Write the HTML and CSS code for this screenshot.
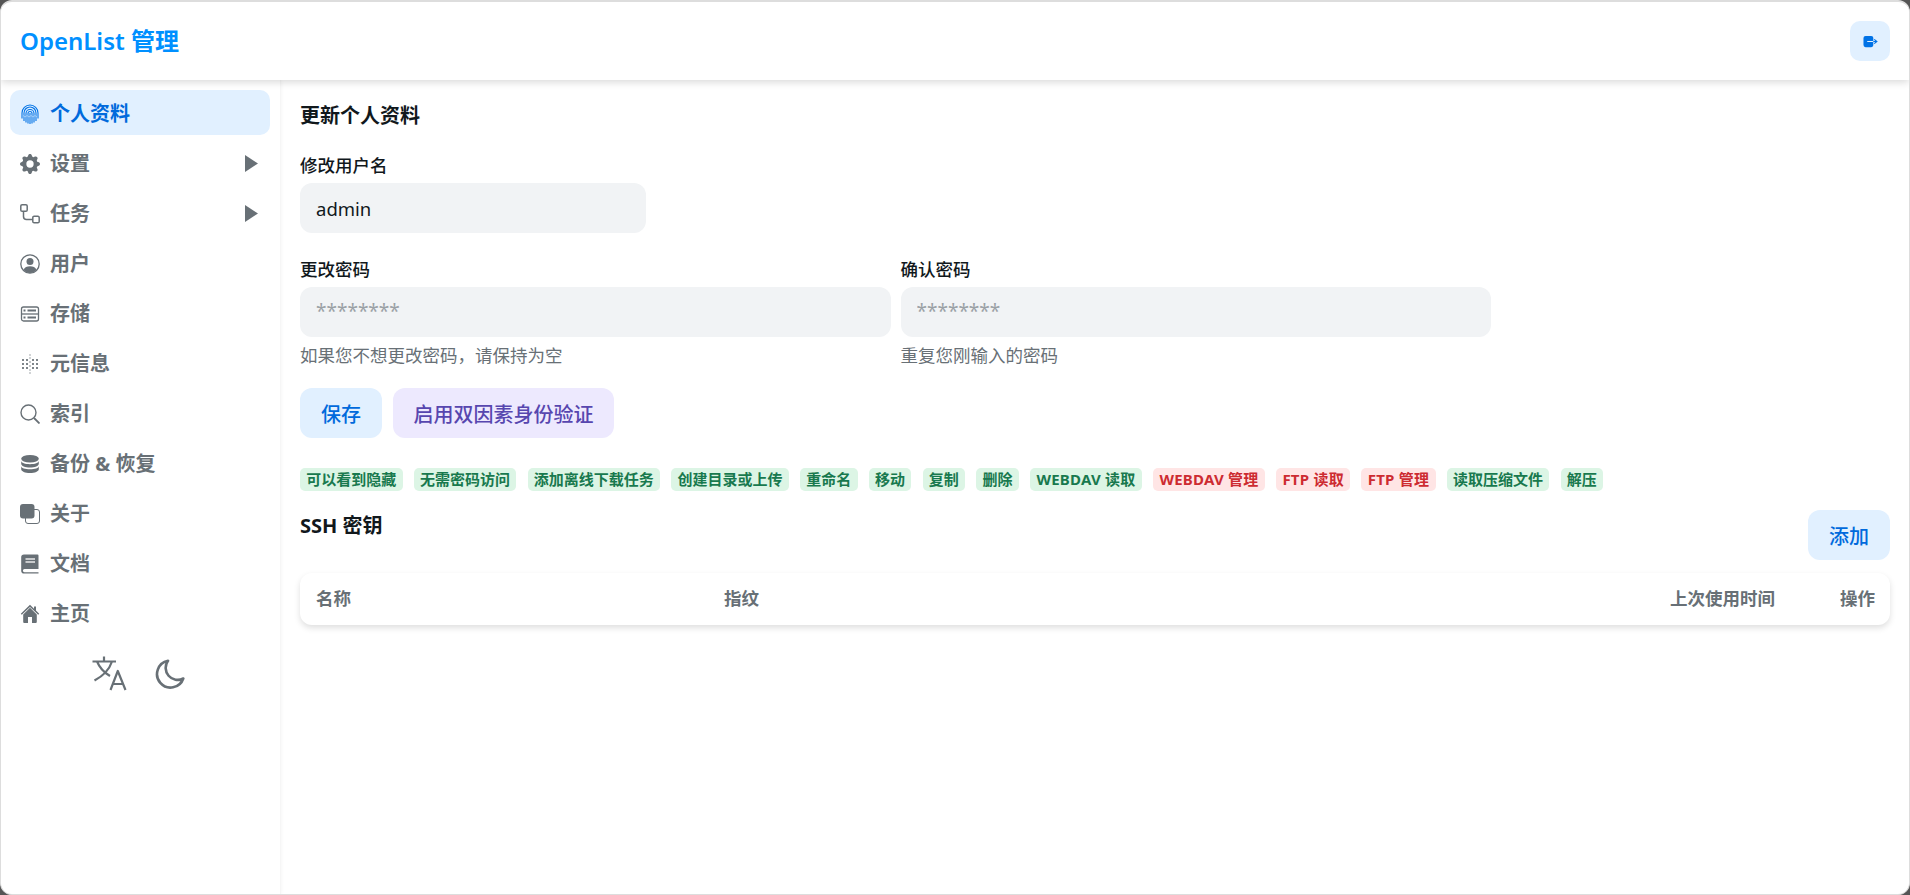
FILE: index.html
```html
<!DOCTYPE html>
<html lang="zh-CN">
<head>
<meta charset="utf-8">
<title>OpenList 管理</title>
<link rel="stylesheet" href="styles.css">
</head>
<body>
<div class="app">
  <header class="topbar">
    <h1 class="brand">OpenList 管理</h1>
    <button class="logout" type="button" aria-label="退出">
      <svg viewBox="0 0 16 16" width="15" height="15"><rect x="0.5" y="2" width="10.5" height="12" rx="2.2" fill="#0072e6"/><path d="M4.5 8H14.5M12 5.7 14.8 8 12 10.3" fill="none" stroke="#0072e6" stroke-width="1.2"/><path d="M4.5 8H11" stroke="#e1f0ff" stroke-width="1.2"/></svg>
    </button>
  </header>
  <div class="body">
    <aside class="sidebar">
      <nav class="menu">
        <a class="item active">
          <svg class="ico" viewBox="0 0 20 20" fill="none" stroke="#0072e6" stroke-width="1.100"><path d="M2 14.500V9a8 8 0 0 1 16 0v5.500"/><path d="M4 17V9a6 6 0 0 1 12 0v8"/><path d="M6 18.500V9.500a4 4 0 0 1 8 0v9"/><path d="M8 19.500V9.500a2 2 0 0 1 4 0v10"/><path d="M10 9V20"/><path d="M3 11.500 5 13 7 11.500 9 13 11 11.500 13 13 15 11.500 17 13" stroke="#e1f0ff" stroke-width=".5"/></svg>
          <span class="label">个人资料</span>
        </a>
        <a class="item">
          <svg class="ico" viewBox="0 0 16 16" fill="#687076"><path d="M9.405 1.050c-.413-1.400-2.397-1.400-2.810 0l-.100.340a1.464 1.464 0 0 1-2.105.872l-.310-.170c-1.283-.698-2.686.705-1.987 1.987l.169.311c.446.820.023 1.841-.872 2.105l-.340.100c-1.400.413-1.400 2.397 0 2.810l.340.100a1.464 1.464 0 0 1 .872 2.105l-.170.310c-.698 1.283.705 2.686 1.987 1.987l.311-.169a1.464 1.464 0 0 1 2.105.872l.100.340c.413 1.400 2.397 1.400 2.810 0l.100-.340a1.464 1.464 0 0 1 2.105-.872l.310.170c1.283.698 2.686-.705 1.987-1.987l-.169-.311a1.464 1.464 0 0 1 .872-2.105l.340-.100c1.400-.413 1.400-2.397 0-2.810l-.340-.100a1.464 1.464 0 0 1-.872-2.105l.170-.310c.698-1.283-.705-2.686-1.987-1.987l-.311.169a1.464 1.464 0 0 1-2.105-.872l-.100-.340zM8 10.930a2.929 2.929 0 1 1 0-5.860 2.929 2.929 0 0 1 0 5.858z"/></svg>
          <span class="label">设置</span>
          <svg class="caret" viewBox="0 0 13 17"><path d="M0 0 13 8.500 0 17z" fill="#687076"/></svg>
        </a>
        <a class="item">
          <svg class="ico" viewBox="0 0 20 20" fill="none" stroke="#687076" stroke-width="1.500"><rect x=".8" y=".8" width="6.400" height="6.400" rx="1.300"/><rect x="12.800" y="12.300" width="6.400" height="6.400" rx="1.300"/><path d="M3.500 7.200v5.300c0 2 1.200 3 3 3H12.800"/></svg>
          <span class="label">任务</span>
          <svg class="caret" viewBox="0 0 13 17"><path d="M0 0 13 8.500 0 17z" fill="#687076"/></svg>
        </a>
        <a class="item">
          <svg class="ico" viewBox="0 0 20 20"><circle cx="10" cy="10" r="9.200" fill="none" stroke="#687076" stroke-width="1.300"/><circle cx="10" cy="7.500" r="3.500" fill="#687076"/><path d="M3.500 15.800C4.500 13.300 7 12.300 10 12.300s5.500 1 6.500 3.500C15 17.800 12.700 19 10 19s-5-1.200-6.500-3.200z" fill="#687076"/></svg>
          <span class="label">用户</span>
        </a>
        <a class="item">
          <svg class="ico" viewBox="0 0 20 20" fill="none" stroke="#687076" stroke-width="1.300"><rect x="1.500" y="3" width="17" height="14" rx="2"/><path d="M1.500 10H18.500"/><path d="M7.500 6.500H16M7.500 13.500H16" stroke-width="1.800"/><path d="M3.500 6.500H5.500M3.500 13.500H5.500" stroke-width="1.800"/></svg>
          <span class="label">存储</span>
        </a>
        <a class="item">
          <svg class="ico" viewBox="0 0 20 20" fill="#687076"><g opacity=".3"><rect x="9" y="0" width="2" height="2"/><rect x="9" y="3" width="2" height="2"/><rect x="9" y="15" width="2" height="2"/><rect x="9" y="18" width="2" height="2"/></g><g opacity=".85"><rect x="2" y="5" width="2" height="2"/><rect x="6" y="5" width="2" height="2"/><rect x="12" y="5" width="2" height="2"/><rect x="16" y="5" width="2" height="2"/><rect x="2" y="9" width="2" height="2"/><rect x="6" y="9" width="2" height="2"/><rect x="12" y="9" width="2" height="2"/><rect x="16" y="9" width="2" height="2"/><rect x="2" y="13" width="2" height="2"/><rect x="6" y="13" width="2" height="2"/><rect x="12" y="13" width="2" height="2"/><rect x="16" y="13" width="2" height="2"/></g><g opacity=".4"><rect x="9" y="7" width="2" height="2"/><rect x="9" y="11" width="2" height="2"/></g></svg>
          <span class="label">元信息</span>
        </a>
        <a class="item">
          <svg class="ico" viewBox="0 0 20 20" fill="none" stroke="#687076" stroke-width="1.400"><circle cx="8.500" cy="8.500" r="7.500"/><path d="M14 14 19.500 19.500" stroke-width="1.800"/></svg>
          <span class="label">索引</span>
        </a>
        <a class="item">
          <svg class="ico" viewBox="0 0 20 20" fill="#687076"><ellipse cx="10" cy="4.800" rx="8.800" ry="3.800"/><path d="M1.200 6.800V9.800C1.200 11.900 5.100 13.600 10 13.600s8.800-1.700 8.800-3.800V6.800C18.800 8.900 14.900 10.200 10 10.200S1.200 8.900 1.200 6.800z"/><path d="M1.200 12V15.200C1.200 17.300 5.100 19 10 19s8.800-1.700 8.800-3.800V12C18.800 14.100 14.900 15.200 10 15.200S1.200 14.100 1.200 12z"/></svg>
          <span class="label">备份 &amp; 恢复</span>
        </a>
        <a class="item">
          <svg class="ico" viewBox="0 0 20 20"><rect x="5.500" y="5.500" width="14" height="14" rx="2.500" fill="none" stroke="#687076" stroke-width="1"/><rect x="0" y="0" width="14.500" height="14.500" rx="3" fill="#687076"/></svg>
          <span class="label">关于</span>
        </a>
        <a class="item">
          <svg class="ico" viewBox="0 0 20 20"><path d="M4 0.500H17.500a1 1 0 0 1 1 1V15H4.500a1.600 1.600 0 0 0 0 3.200h14v1.300H4A2.800 2.800 0 0 1 1.200 16.700V3.300A2.800 2.800 0 0 1 4 .5z" fill="#687076"/><path d="M5.500 5H15M5.500 8H15" stroke="#fff" stroke-width="1.300" opacity=".85"/></svg>
          <span class="label">文档</span>
        </a>
        <a class="item">
          <svg class="ico" viewBox="0 0 20 20" fill="#687076"><path d="M10 3.800 3.200 10.500V17.700c0 .8.500 1.300 1.300 1.300H8v-6h4v6h3.500c.8 0 1.300-.5 1.300-1.300V10.500z"/><path d="M10 .8 .8 9.800 1.800 10.800 10 2.900 18.200 10.800 19.200 9.800 16 6.600V2.500H14V4.700z"/></svg>
          <span class="label">主页</span>
        </a>
      </nav>
      <div class="tools">
        <svg class="tool-lang" viewBox="0 0 36 35" fill="none" stroke="#687076" stroke-width="2.200" stroke-linejoin="round"><path d="M0.500 5.500H24M12 0.500V5.500M20 5.500C17.500 13 11 20 2.500 24.500M5 5.500C7.500 11.500 12 16.500 18 20"/><path d="M18.500 34 25.800 15 33.500 34M21 28H31"/></svg>
        <svg class="tool-moon" viewBox="0 0 30 30" fill="none" stroke="#687076" stroke-width="2.600" stroke-linejoin="round"><path d="M13 1.800A13.500 13.500 0 1 0 28.300 19.500 12 12 0 0 1 13 1.800z"/></svg>
      </div>
    </aside>
    <main class="content">
      <h2 class="title">更新个人资料</h2>
      <div class="field username">
        <label class="field-label">修改用户名</label>
        <input class="input" type="text" value="admin">
      </div>
      <div class="pw-row">
        <div class="field">
          <label class="field-label">更改密码</label>
          <input class="input" type="password" placeholder="********">
          <p class="help">如果您不想更改密码，请保持为空</p>
        </div>
        <div class="field">
          <label class="field-label">确认密码</label>
          <input class="input" type="password" placeholder="********">
          <p class="help">重复您刚输入的密码</p>
        </div>
      </div>
      <div class="actions">
        <button class="btn blue save" type="button">保存</button>
        <button class="btn purple" type="button">启用双因素身份验证</button>
      </div>
      <ul class="tags">
        <li class="tag ok">可以看到隐藏</li>
        <li class="tag ok">无需密码访问</li>
        <li class="tag ok">添加离线下载任务</li>
        <li class="tag ok">创建目录或上传</li>
        <li class="tag ok">重命名</li>
        <li class="tag ok">移动</li>
        <li class="tag ok">复制</li>
        <li class="tag ok">删除</li>
        <li class="tag ok latin">WEBDAV 读取</li>
        <li class="tag no latin">WEBDAV 管理</li>
        <li class="tag no latin">FTP 读取</li>
        <li class="tag no latin">FTP 管理</li>
        <li class="tag ok">读取压缩文件</li>
        <li class="tag ok">解压</li>
      </ul>
      <div class="ssh-head">
        <h2 class="title">SSH 密钥</h2>
        <button class="btn blue save" type="button">添加</button>
      </div>
      <table class="keys">
        <thead>
          <tr>
            <th class="c-name">名称</th>
            <th>指纹</th>
            <th class="c-time">上次使用时间</th>
            <th class="c-ops">操作</th>
          </tr>
        </thead>
      </table>
    </main>
  </div>
</div>
</body>
</html>
```
FILE: styles.css
```css
* { box-sizing: border-box; }
html, body { margin: 0; height: 100%; background: #555; }
body {
  font-family: "Noto Sans", "Noto Sans CJK SC", sans-serif;
  color: #11181c;
  overflow: hidden;
}
.app {
  height: 895px;
  display: flex;
  flex-direction: column;
  background: #fff;
  border: 1px solid #ddd;
  border-top-width: 2px;
  border-radius: 12px;
  overflow: hidden;
}
.topbar {
  height: 78px;
  flex: none;
  display: flex;
  align-items: center;
  justify-content: space-between;
  padding: 0 19px;
  background: #fff;
  box-shadow: 0 2px 8px rgba(0, 0, 0, .16);
  position: relative;
  z-index: 1;
}
.brand { margin: 0; font-size: 24px; font-weight: 600; color: #0090ff; line-height: 1; }
.logout {
  width: 40px;
  height: 40px;
  padding: 0;
  border: 0;
  border-radius: 10px;
  background: #e1f0ff;
  display: flex;
  align-items: center;
  justify-content: center;
}
.body { flex: 1; display: flex; min-height: 0; }
.sidebar {
  width: 280px;
  flex: none;
  padding: 10px 10px 10px 9px;
  border-right: 1px solid #f6f6f6;
  box-shadow: 1px 0 3px rgba(0, 0, 0, .03);
}
.menu { display: flex; flex-direction: column; gap: 5px; }
.item {
  height: 45px;
  display: flex;
  align-items: center;
  gap: 10px;
  padding: 2px 12px 0 10px;
  border-radius: 10px;
  color: #687076;
  font-size: 20px;
  font-weight: 700;
}
.item.active { background: #e1f0ff; color: #006adc; }
.ico { width: 20px; height: 20px; flex: none; }
.label { flex: 1; line-height: 1; }
.caret { width: 13px; height: 17px; flex: none; }
.tools {
  margin-top: 21px;
  display: flex;
  justify-content: center;
  align-items: center;
  gap: 27px;
  padding-right: 3px;
}
.tool-lang { width: 36px; height: 35px; }
.tool-moon { width: 30px; height: 30px; }
.content { flex: 1; min-width: 0; padding: 20px 19px 0 19px; }
.title { margin: 0; font-size: 20px; font-weight: 700; line-height: 32px; }
.field { display: flex; flex-direction: column; min-width: 0; }
.field-label { font-size: 17.5px; font-weight: 500; line-height: 22px; margin-bottom: 7px; }
.username { width: 346px; margin-top: 22px; }
.input {
  width: 100%;
  height: 50px;
  padding: 0 16px;
  border: 0;
  border-radius: 12px;
  background: #f1f3f5;
  color: #11181c;
  font: 400 18.500px "Noto Sans", "Noto Sans CJK SC", sans-serif;
  outline: 0;
}
.input::placeholder { color: #9ba1a6; opacity: 1; font-size: 19px; }
.pw-row {
  margin-top: 25px;
  width: 1191px;
  display: grid;
  grid-template-columns: 1fr 1fr;
  gap: 10px;
}
.pw-row .input { padding-bottom: 4px; }
.help { margin: 7px 0 0; font-size: 17.5px; line-height: 22px; color: #687076; }
.actions { margin-top: 22px; display: flex; gap: 11px; }
.btn {
  height: 50px;
  border: 0;
  border-radius: 12px;
  font: 500 20px "Noto Sans", "Noto Sans CJK SC", sans-serif;
  padding: 0 20.500px;
}
.blue { background: #e1f0ff; color: #006adc; }
.purple { background: #ede9fe; color: #5746af; }
.save { width: 82px; padding: 0; flex: none; }
.tags {
  list-style: none;
  margin: 30px 0 0;
  padding: 0;
  display: flex;
  gap: 11.250px;
}
.tag {
  height: 23px;
  padding: 0 6.250px;
  border-radius: 5px;
  font-size: 15px;
  font-weight: 700;
  line-height: 23px;
  white-space: nowrap;
}
.latin { letter-spacing: .25px; }
.ok { background: #dcf5e5; color: #18794e; }
.no { background: #ffe5e5; color: #cd2b31; }
.ssh-head {
  margin-top: 19px;
  display: flex;
  justify-content: space-between;
  align-items: flex-start;
}
.keys {
  margin-top: 13px;
  width: 100%;
  height: 52px;
  border-collapse: separate;
  border-spacing: 0;
  border-radius: 12px;
  box-shadow: 0 3px 6px rgba(0, 0, 0, .13);
}
.keys th {
  padding: 0 15px 4px 16px;
  text-align: left;
  font-size: 17.5px;
  font-weight: 700;
  color: #687076;
}
.keys .c-name { width: 408px; }
.keys .c-time { text-align: right; width: 250px; }
.keys .c-ops { text-align: right; width: 100px; }
```
